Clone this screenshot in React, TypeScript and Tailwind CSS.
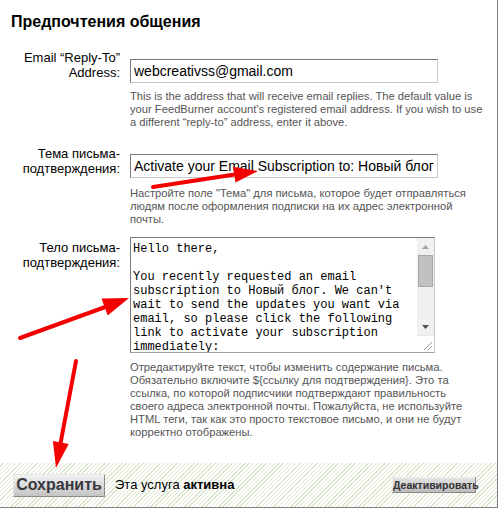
import React from 'react';

const bodyText =
  "Hello there,\n\nYou recently requested an email subscription to Новый блог. We can't wait to send the updates you want via email, so please click the following link to activate your subscription immediately:\n\n${confirmlink}\n\n(If the link above does not appear clickable or does not open a browser window when you click it, copy it and paste it into your web browser's Location bar.)\n\nNot sure why you received this email? Details are at the bottom of this message.";

const bodyHint =
  'Отредактируйте текст, чтобы изменить содержание письма. Обязательно включите ${ссылку для подтверждения}. Это та ссылка, по которой подписчики подтверждают правильность своего адреса электронной почты. Пожалуйста, не используйте HTML теги, так как это просто текстовое письмо, и они не будут корректно отображены.';

const Arrows: React.FC = () => (
  <svg className="absolute inset-0 pointer-events-none" width="504" height="525" viewBox="0 0 504 525">
    <g stroke="#f40000" strokeWidth="4" strokeLinecap="round" fill="none">
      <line x1="153" y1="187" x2="238" y2="174" />
      <line x1="20" y1="338" x2="108" y2="306" />
      <line x1="76" y1="361" x2="60" y2="446" />
    </g>
    <g fill="#f40000">
      <polygon points="258,171 235.5,182.5 233.1,166.7" />
      <polygon points="129,298 107.7,315.5 101.5,298.5" />
      <polygon points="56,468 68.7,443.9 52.9,440.9" />
    </g>
  </svg>
);

// classic windows-style scrollbar drawn beside the textarea
const FakeScrollbar: React.FC = () => (
  <div className="w-[17px] flex flex-col bg-[#f0f0f0]">
    <div className="h-[17px] flex items-center justify-center">
      <svg width="7" height="4" viewBox="0 0 7 4">
        <polygon points="3.5,0 7,4 0,4" fill="#a3a3a3" />
      </svg>
    </div>
    <div className="flex-1">
      <div className="mx-[1px] h-[32px] bg-[#c1c1c1] border border-[#a8a8a8]" />
    </div>
    <div className="h-[17px] flex items-center justify-center">
      <svg width="7" height="4" viewBox="0 0 7 4">
        <polygon points="0,0 7,0 3.5,4" fill="#505050" />
      </svg>
    </div>
    <div className="h-[17px] bg-white border-t border-[#e6e6e6] flex items-end justify-end p-[2px]">
      <svg width="9" height="9" viewBox="0 0 9 9">
        <g stroke="#9a9a9a" strokeWidth="1">
          <line x1="1" y1="9" x2="9" y2="1" />
          <line x1="5" y1="9" x2="9" y2="5" />
        </g>
      </svg>
    </div>
  </div>
);

const App: React.FC = () => {
  return (
    <div className="relative w-[504px] h-[525px] bg-white font-['Liberation_Sans',Arial,sans-serif] text-black">
      <div className="w-[498px] border-r border-b border-[#808080]">
        <h2 className="pt-[12px] pl-[11px] text-[16px] leading-[20px] font-bold">Предпочтения общения</h2>

        {/* Reply-To */}
        <div className="flex mt-[18px]">
          <div className="w-[120px] text-right text-[13px] leading-[15px]">
            Email “Reply-To”
            <br />
            Address:
          </div>
          <div className="ml-[10px] w-[356px]">
            <input
              type="text"
              defaultValue="webcreativss@gmail.com"
              className="mt-[9px] block w-[308px] h-[24px] px-[3px] text-[14px] border border-t-[#7a7a7a] border-l-[#7a7a7a] border-r-[#c8c8c8] border-b-[#c8c8c8] outline-none"
            />
            <p className="mt-[7px] text-[11.2px] leading-[13px] text-[#555]">
              This is the address that will receive email replies. The default value is your FeedBurner account’s registered email address. If you wish to use a different “reply-to” address, enter it above.
            </p>
          </div>
        </div>

        {/* Subject */}
        <div className="flex mt-[17px]">
          <div className="w-[120px] text-right text-[13px] leading-[15px]">
            Тема письма-
            <br />
            подтверждения:
          </div>
          <div className="ml-[10px] w-[345px]">
            <input
              type="text"
              defaultValue="Activate your Email Subscription to: Новый блог"
              className="mt-[8px] block w-[308px] h-[24px] px-[3px] text-[14px] border border-t-[#7a7a7a] border-l-[#7a7a7a] border-r-[#c8c8c8] border-b-[#c8c8c8] outline-none"
            />
            <p className="mt-[9px] text-[11.2px] leading-[13px] text-[#555]">
              Настройте поле "Тема" для письма, которое будет отправляться людям после оформления подписки на их адрес электронной почты.
            </p>
          </div>
        </div>

        {/* Body */}
        <div className="flex mt-[11px]">
          <div className="w-[120px] pt-[3px] text-right text-[13px] leading-[15px]">
            Тело письма-
            <br />
            подтверждения:
          </div>
          <div className="ml-[10px] w-[345px]">
            <div className="flex w-[305px] h-[116px] border border-t-[#7a7a7a] border-l-[#7a7a7a] border-r-[#c8c8c8] border-b-[#a0a0a0]">
              <textarea
                defaultValue={bodyText}
                className="flex-1 h-full px-[2px] pt-[4px] font-['Liberation_Mono','Courier_New',monospace] text-[12px] leading-[14px] outline-none resize-none overflow-hidden"
              />
              <FakeScrollbar />
            </div>
            <p className="mt-[8px] text-[11.2px] leading-[13px] text-[#555]">{bodyHint}</p>
          </div>
        </div>

        {/* Footer */}
        <div className="mt-[24px] h-[44px] flex items-center pl-[13px] pr-[21px] bg-[repeating-linear-gradient(135deg,#ffffff_0px,#ffffff_2px,#dbe5cc_2px,#dbe5cc_3px)]">
          <button className="w-[92px] h-[23px] text-[16px] leading-[20px] font-bold text-[#383840] bg-gradient-to-b from-[#f2f2f2] to-[#c4c4c4] border border-t-[#e6e6e6] border-l-[#e6e6e6] border-r-[#8a8a8a] border-b-[#8a8a8a]">
            Сохранить
          </button>
          <span className="ml-[10px] text-[13px]">
            Эта услуга <b>активна</b>
          </span>
          <button className="ml-auto w-[84px] h-[16px] text-[10.5px] leading-[14px] font-bold text-[#333] bg-gradient-to-b from-[#e4e4e4] to-[#bcbcbc] border border-t-[#eee] border-l-[#eee] border-r-[#8a8a8a] border-b-[#8a8a8a]">
            Деактивировать
          </button>
        </div>
      </div>
      <Arrows />
    </div>
  );
};

export default App;
